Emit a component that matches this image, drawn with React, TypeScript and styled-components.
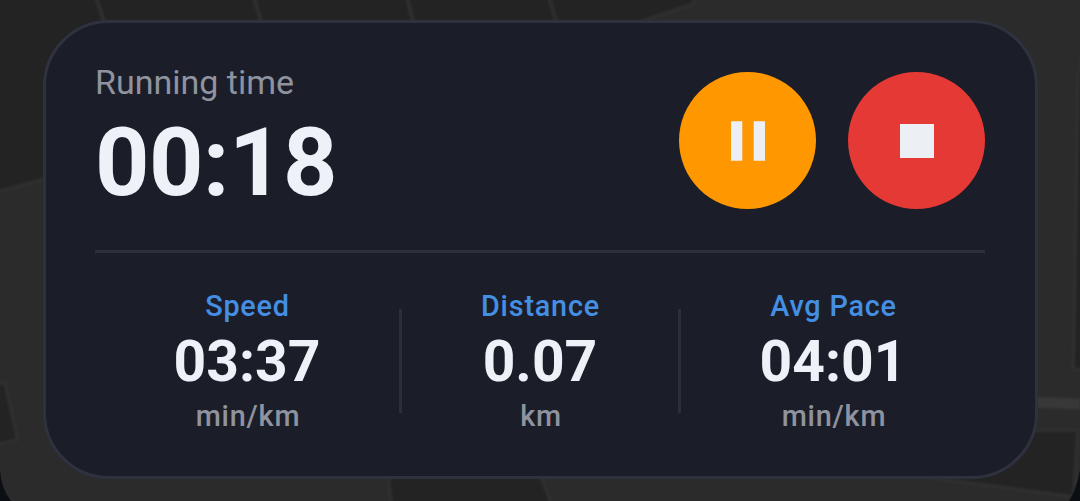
import React from "react";
import styled, { createGlobalStyle } from "styled-components";

const GlobalStyle = createGlobalStyle`
  body {
    margin: 0;
    background: #0b0f14;
    font-family: Roboto, "Liberation Sans", sans-serif;
  }
`

const Screen = styled.div`
  position: relative;
  box-sizing: border-box;
  width: 1080px;
  height: 501px;
  padding: 20px 42.5px 22px;
  overflow: hidden;
`

const MapBackground = styled.svg`
  position: absolute;
  top: 0;
  left: 0;
`

const Streets = styled.g`
  filter: blur(0.8px);
`

const Card = styled.section`
  position: relative;
  box-sizing: border-box;
  height: 459px;
  padding: 49px 49.5px 0;
  border: 3px solid #2d323e;
  border-radius: 66px;
  background: #1b1e28;
`

const TopRow = styled.div`
  display: flex;
  justify-content: space-between;
  height: 178px;
`

const TimerLabel = styled.div`
  margin-top: -10px;
  font-size: 34px;
  line-height: 40px;
  color: #8f939f;
`

const TimerValue = styled.div`
  margin-top: 5px;
  font-size: 95px;
  font-weight: 700;
  line-height: 112px;
  letter-spacing: -0.6px;
  color: #eef1f8;
`

const Controls = styled.div`
  display: flex;
  gap: 32px;
`

const RoundButton = styled.button<{color: string}>`
  display: flex;
  align-items: center;
  justify-content: center;
  width: 137px;
  height: 137px;
  padding: 0;
  border: none;
  border-radius: 50%;
  background: ${(props) => props.color};
  cursor: pointer;
`

const Divider = styled.div`
  height: 3px;
  background: #2d303b;
`

const Stats = styled.div`
  display: grid;
  grid-template-columns: 304px 3px 276px 3px 304px;
  padding-top: 37px;
`

const Separator = styled.div`
  height: 104px;
  margin-top: 19px;
  background: #2c2f3a;
`

const StatWrapper = styled.div`
  text-align: center;
`

const StatLabel = styled.div`
  padding-left: 1px;
  font-size: 28.8px;
  font-weight: 500;
  line-height: 32px;
  letter-spacing: 0.8px;
  color: #448fe3;
`

const StatValue = styled.div`
  font-size: 57px;
  font-weight: 700;
  line-height: 68px;
  margin-top: 6px;
  color: #eef1f8;
`

const StatUnit = styled(StatLabel)`
  margin-top: 4px;
  padding-left: 2px;
  color: #8f939f;
`

const stats = [
  { label: "Speed", value: "03:37", unit: "min/km" },
  { label: "Distance", value: "0.07", unit: "km" },
  { label: "Avg Pace", value: "04:01", unit: "min/km" },
];

const StreetMap = () => (
  <MapBackground width="1080" height="501" viewBox="0 0 1080 501">
    <path d="M0 0H1080V501H0Z" fill="#2b2b2b"/>
    <Streets>
      <g fill="#232323" stroke="#2f2f2f" strokeWidth="4">
        <path d="M-5 -5H694V4L640 22L560 60H80L60 175L-5 193Z"/>
        <path d="M96 -2L105 24M254 -2L262 24M407 -2L414 24M549 -2L557 24" fill="none"/>
        <path d="M-5 384L5 382L18 440L-5 445Z"/>
        <path d="M388 476L391 505H552L541 476Z"/>
        <path d="M1084 45L1078 75L1073 370H1084Z"/>
        <path d="M930 430H1078L1074 497L930 478Z"/>
      </g>
      <path d="M1030 402L1080 404" stroke="#383838" strokeWidth="11"/>
    </Streets>
    <path d="M1069 501Q1077 488 1080 470V501ZM11 501Q1 488 0 470V501Z" fill="#0b0f14"/>
  </MapBackground>
);

const PauseIcon = () => (
  <svg width="137" height="137" viewBox="0 0 137 137" fill="#eceff3">
    <path d="M52 49.3H63.3V88.7H52ZM74.7 49.3H86V88.7H74.7Z"/>
  </svg>
);

const StopIcon = () => (
  <svg width="137" height="137" viewBox="0 0 137 137" fill="#eceff3">
    <path d="M52 52H86V86H52Z"/>
  </svg>
);

const App: React.FunctionComponent = () => {
  return (
    <Screen>
      <GlobalStyle/>
      <StreetMap/>
      <Card>
        <TopRow>
          <div>
            <TimerLabel>Running time</TimerLabel>
            <TimerValue>00:18</TimerValue>
          </div>
          <Controls>
            <RoundButton color="#ff9800" aria-label="Pause"><PauseIcon/></RoundButton>
            <RoundButton color="#e53935" aria-label="Stop"><StopIcon/></RoundButton>
          </Controls>
        </TopRow>
        <Divider/>
        <Stats>
          {stats.map((stat, i) => (
            <React.Fragment key={stat.label}>
              {i > 0 && <Separator/>}
              <StatWrapper>
                <StatLabel>{stat.label}</StatLabel>
                <StatValue>{stat.value}</StatValue>
                <StatUnit>{stat.unit}</StatUnit>
              </StatWrapper>
            </React.Fragment>
          ))}
        </Stats>
      </Card>
    </Screen>
  );
};

export default App;
